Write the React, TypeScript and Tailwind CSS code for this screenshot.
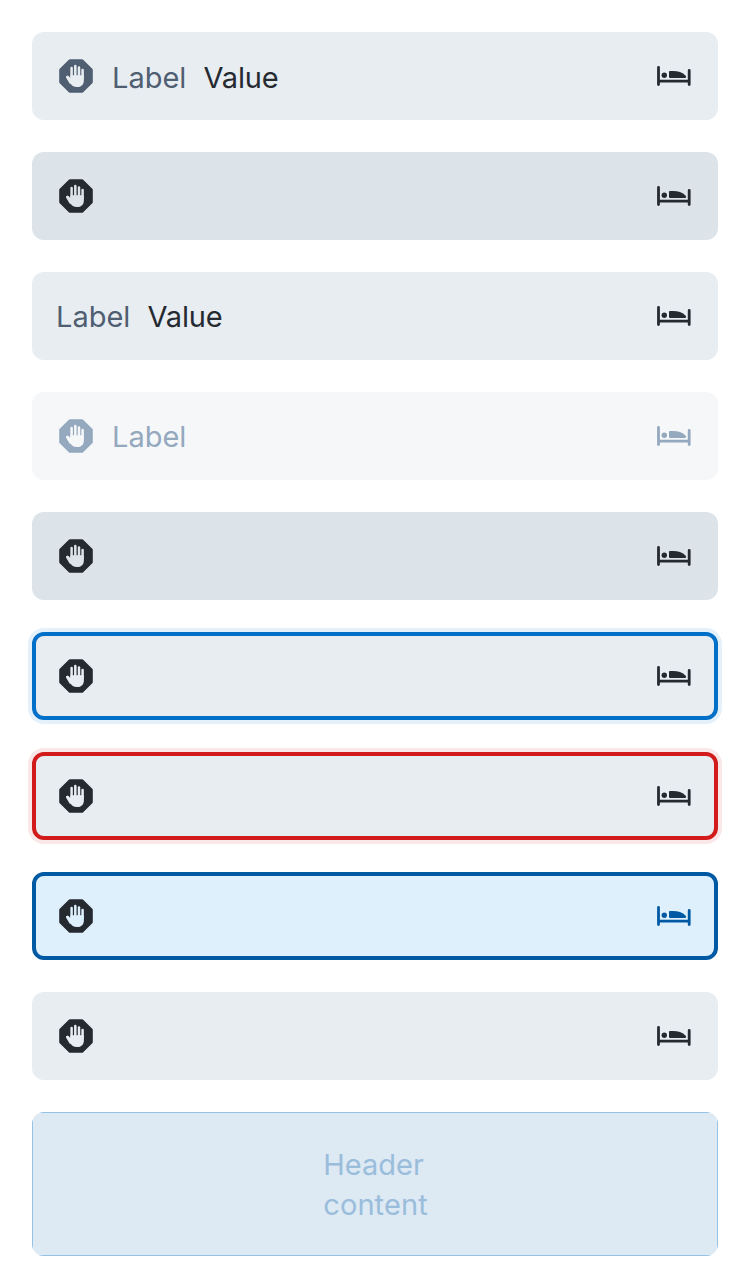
import { useId } from "react";

type Row = { box: string; left?: string; right?: string; label?: boolean; value?: boolean; icon?: boolean; textShift?: string };

function Hand({ className }: { className: string }) {
  const id = useId();
  return (
    <svg viewBox="0 0 36 36" className={`h-9 w-9 shrink-0 ${className}`}>
      <mask id={id}>
        <path
          d="M12 1.200h12q.7 0 1.200.5l9.100 9.100q.5.5.5 1.200v12q0 .7-.5 1.200l-9.100 9.100q-.5.5-1.200.5H12q-.7 0-1.200-.5l-9.100-9.100Q1.200 24.700 1.200 24V12q0-.7.5-1.200l9.100-9.100Q11.300 1.200 12 1.200z"
          fill="white"
        />
        <g stroke="black" strokeWidth="2.500" strokeLinecap="round" fill="none">
          <path d="M13.600 20V10M17.300 18V8M21 18V9.600M24.600 20v-8M9.300 19l3.200 5.500" />
        </g>
        <path
          d="M12.350 17.300h13.500V22.500c0 4.200-2.500 6.600-6.700 6.600-3.600 0-5.600-1.300-6.900-4.300L8.300 19.400c-.5-1.400 1-2.300 2.100-1.300l1.950 2z"
          fill="black"
        />
      </mask>
      <rect width="36" height="36" fill="currentColor" mask={`url(#${id})`} />
    </svg>
  );
}

function Bed({ className }: { className: string }) {
  return (
    <svg viewBox="0 0 36 36" className={`h-9 w-9 shrink-0 ${className}`} fill="currentColor">
      <path d="M2.500 8A1.400 1.400 0 0 1 3.900 9.400v12.400h27.900v-9.400a1.400 1.400 0 0 1 2.800 0v14.200a1.400 1.400 0 0 1-2.800 0v-2.100H3.900v2.100a1.400 1.400 0 0 1-2.800 0V9.400A1.400 1.400 0 0 1 2.500 8z" />
      <circle cx="8.300" cy="17.200" r="2.700" />
      <path d="M13 13.900q0-.8.800-.8h3.200c5 0 9.500 1.300 12.700 4.700.9 1.200.4 2.100-.8 2.100H13.800q-.8 0-.8-.8z" />
    </svg>
  );
}

const rows: Row[] = [
  { box: "px-[26px] bg-[#e8edf1]", left: "text-[#4f5e71]", icon: true, label: true, value: true, textShift: "pt-[3px]" },
  { box: "px-[26px] bg-[#dce3e9]", icon: true },
  { box: "pr-[26px] pl-6 bg-[#e8edf1]", label: true, value: true, textShift: "pt-px" },
  { box: "px-[26px] bg-[#f5f7f9]", left: "text-[#94a8be]", right: "text-[#94a8be]", icon: true, label: true, textShift: "pt-px" },
  { box: "px-[26px] bg-[#dce3e9]", icon: true },
  { box: "px-[22px] bg-[#e8edf1] border-4 border-[#0070c9] ring-4 ring-[#e5f1fa]", icon: true },
  { box: "px-[22px] bg-[#e8edf1] border-4 border-[#d21c1c] ring-4 ring-[#fae8e8]", icon: true },
  { box: "px-[22px] bg-[#def0fc] border-4 border-[#005aa3]", right: "text-[#005aa3]", icon: true },
  { box: "px-[26px] bg-[#e8edf1]", icon: true },
];

export default function App() {
  return (
    <main className="flex min-h-[1288px] w-[750px] flex-col gap-8 bg-white p-8 font-['Inter',sans-serif] text-[29px] leading-10">
      {rows.map((row, i) => (
        <div key={i} className={`flex h-[88px] items-center rounded-xl ${row.box}`}>
          {row.icon && <Hand className={row.left ?? "text-[#252a31]"} />}
          {row.label && (
            <p className={`flex gap-[17px] ${row.icon ? "ml-[18px]" : ""} ${row.textShift ?? ""}`}>
              <span className={row.left ?? "text-[#4f5e71]"}>Label</span>
              {row.value && <span className="tracking-[-0.15px] text-[#252a31]">Value</span>}
            </p>
          )}
          <div className="grow" />
          <Bed className={row.right ?? "text-[#252a31]"} />
        </div>
      ))}
      <div className="overflow-hidden rounded-xl">
        <div className="flex h-36 items-center justify-center border border-[#93c3e6] bg-[#dde9f3] pt-px text-[#9abddb]">
          <p className="pl-px">Header<br /><span className="tracking-[0.1px]">content</span></p>
        </div>
      </div>
    </main>
  );
}
